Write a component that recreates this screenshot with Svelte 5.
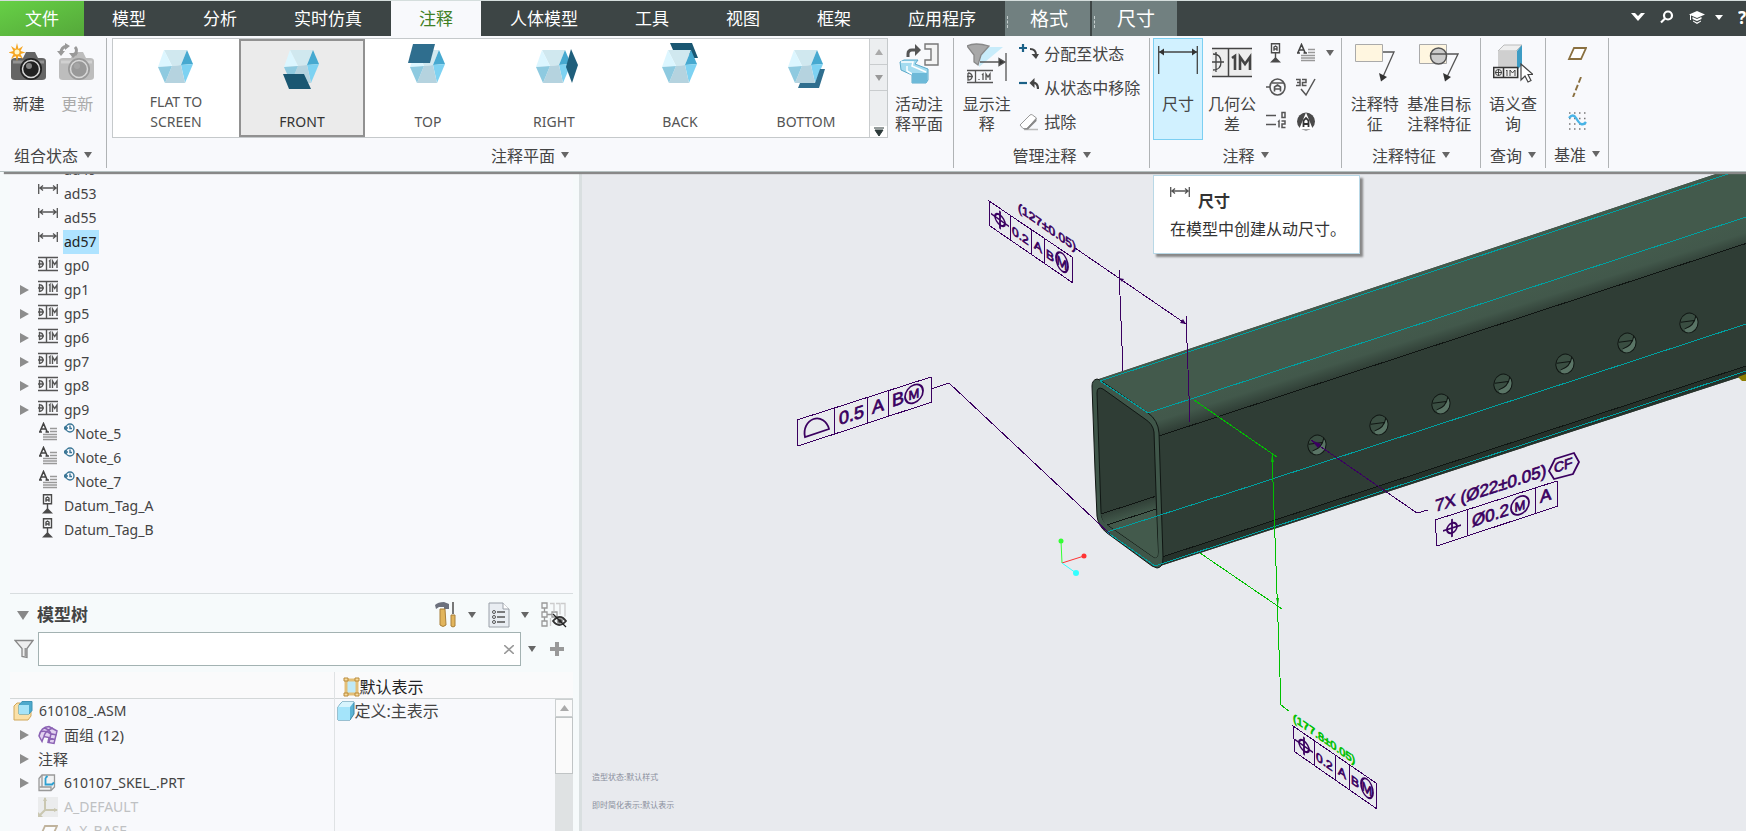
<script>
  let activeTab = $state("注释");
  let plane = $state("FRONT");
  let selected = $state("ad57");
  let search = $state("");

  const tabs = ["模型", "分析", "实时仿真", "注释", "人体模型", "工具", "视图", "框架", "应用程序"];
  const contextTabs = ["格式", "尺寸"];

  // extra face drawn over (or behind) the cube of each annotation plane
  const planes = [
    { name: "FLAT TO SCREEN" },
    { name: "FRONT", face: "6,35 27,35 34,50 12,50", color: "#1a5772" },
    { name: "TOP", face: "10,5 32,5 27,24 5,24", color: "#2f6e8e" },
    { name: "RIGHT", face: "42,10 49,26 43,44 37,28", color: "#1f5f7c" },
    { name: "BACK", face: "15,4 37,4 43,19 36,19 33,11 18,11", color: "#1a5772" },
    { name: "BOTTOM", face: "39,30 44,30 38,49 17,49 19,44 34,44", color: "#2f6e8e" },
  ];

  const annotations = [
    { name: "ad49", icon: "dim" },
    { name: "ad53", icon: "dim" },
    { name: "ad55", icon: "dim" },
    { name: "ad57", icon: "dim" },
    { name: "gp0", icon: "gtol" },
    { name: "gp1", icon: "gtol", open: true },
    { name: "gp5", icon: "gtol", open: true },
    { name: "gp6", icon: "gtol", open: true },
    { name: "gp7", icon: "gtol", open: true },
    { name: "gp8", icon: "gtol", open: true },
    { name: "gp9", icon: "gtol", open: true },
    { name: "Note_5", icon: "note", clock: true },
    { name: "Note_6", icon: "note", clock: true },
    { name: "Note_7", icon: "note", clock: true },
    { name: "Datum_Tag_A", icon: "tag" },
    { name: "Datum_Tag_B", icon: "tag" },
  ];

  const model = [
    { name: "610108_.ASM", icon: "asm", root: true, rep: "定义:主表示" },
    { name: "面组 (12)", icon: "quilt", open: true, cjk: true },
    { name: "注释", open: true, cjk: true },
    { name: "610107_SKEL_.PRT", icon: "part", open: true },
    { name: "A_DEFAULT", icon: "csys", dim: true },
    { name: "A_X_BASE", icon: "plane", dim: true },
  ];

  const holes = [
    [1317, 445], [1379, 425], [1441, 404], [1503, 384], [1565, 364], [1627, 343], [1689, 323],
  ];
</script>

{#snippet icon(name)}
  {#if name === "dim"}
    <svg width="20" height="20" viewBox="0 0 20 20" fill="none" stroke="#555" stroke-width="1.3">
      <path d="M.7 2v10M19.3 2v10M2 6h16M5 3.500 2 6l3 2.500M15 3.500 18 6l-3 2.500" />
    </svg>
  {:else if name === "gtol"}
    <svg width="20" height="20" viewBox="0 0 20 20" fill="none" stroke="#555" stroke-width="1.400">
      <path d="M0 3.500h20M0 16.500h20M8.500 3.500v13" />
      <path d="M1 6.500q4 .5 4 3.500t-4 3.500M1.500 6v8M0 10h6M11 7.500l1-1v7.500M14.500 14V7l2.200 3.500L19 7v7" />
    </svg>
  {:else if name === "note"}
    <svg width="20" height="20" viewBox="0 0 20 20" fill="none" stroke="#999" stroke-width="1.300">
      <path d="M12 6.500h7M12 9.500h7M5 12.500h14M5 15h14M5 17.500h14" />
      <path d="M2 9.500 5.500 1.500 9 9.500M3 7h5M1 10h3M7.500 10H11" stroke="#444" stroke-width="1.600" />
    </svg>
  {:else if name === "tag"}
    <svg width="20" height="20" viewBox="0 0 20 20" fill="none" stroke="#4a4a4a" stroke-width="1.400">
      <path d="M5.500.8h8v9h-8zM9.500 10v6M8 7.800V4l1.500-1 1.500 1v3.800M8 6h3" />
      <path d="M4 19.500 9.500 14l5.500 5.500z" fill="#4a4a4a" stroke="none" />
    </svg>
  {:else if name === "bubble"}
    <svg width="20" height="20" viewBox="0 0 20 20" fill="none" stroke="#555" stroke-width="1.600">
      <path d="M0 10h4M6 6h12M8.500 14.500V10l3-2 3 2v4.500M8.500 12h6" /><ellipse cx="11.500" cy="10" rx="7.500" ry="8" />
    </svg>
  {:else if name === "finish"}
    <svg width="20" height="20" viewBox="0 0 20 20" fill="none" stroke="#555" stroke-width="1.500">
      <path d="M0 2.500h4v6H0M1 5.500h3M6 2.500h4v3H6.500v3H10.500M5 12l5 6 9-16" />
    </svg>
  {:else if name === "ordinate"}
    <svg width="20" height="20" viewBox="0 0 20 20" fill="none" stroke="#555" stroke-width="1.500">
      <path d="M0 4.500h10M0 13.500h10M16 1.500h3v5h-3zM12 11l1-1v6.500M15.500 10h3.500v3h-3v3.500h3.500" />
    </svg>
  {:else if name === "target"}
    <svg width="20" height="20" viewBox="0 0 20 20">
      <circle cx="10" cy="10.500" r="9" fill="#4a4a4a" /><path d="M10 1.500 17 18.500H3z" fill="#fff" />
      <path d="M7.500 16V9.500L10 7l2.500 2.500V16M7.500 13h5" fill="none" stroke="#333" stroke-width="1.800" />
    </svg>
  {:else if name === "plane"}
    <svg width="20" height="20" viewBox="0 0 20 20"><path d="M7 5h12l-5 11H2z" fill="#fff" stroke="#8a7040" stroke-width="1.800" /></svg>
  {:else if name === "axis"}
    <svg width="20" height="20" viewBox="0 0 20 20"><path d="M14 0 6 20" stroke="#8a7040" stroke-width="1.900" stroke-dasharray="6 2.500" /></svg>
  {:else if name === "curve"}
    <svg width="20" height="20" viewBox="0 0 20 20" fill="none">
      <path d="M2 2h17M2 7.500h17M2 13h17M2 18h17" stroke="#777" stroke-width="1.500" stroke-dasharray="1.500 3.500" />
      <path d="M2 7q4-5 7 0t5 6q3 1 5-2" stroke="#49b4e6" stroke-width="2.400" />
    </svg>
  {:else if name === "add"}
    <svg width="20" height="20" viewBox="0 0 20 20">
      <path d="M0 5h8M4 1v8" stroke="#1b6187" stroke-width="2.200" />
      <path d="M11 6q6 0 6 6" fill="none" stroke="#444" stroke-width="2" /><path d="M12.500 11H20l-3 5z" fill="#444" />
    </svg>
  {:else if name === "remove"}
    <svg width="20" height="20" viewBox="0 0 20 20">
      <path d="M0 6h8" stroke="#1b6187" stroke-width="2.200" />
      <path d="M13 6q6-1 6 6" fill="none" stroke="#444" stroke-width="2.200" /><path d="M15.500 1v10L10.500 6z" fill="#444" />
    </svg>
  {:else if name === "eraser"}
    <svg width="20" height="20" viewBox="0 0 20 20">
      <path d="M5 18.500h14" stroke="#bbb" stroke-width="1.500" />
      <path d="M1 14 11 4q1-1 2.500 0l4 3L8 17.500H4z" fill="#fff" stroke="#999" /><path d="M17.500 7v3L9 18.500H4.500L8 17z" fill="#888" />
    </svg>
  {:else if name === "asm"}
    <svg width="20" height="20" viewBox="0 0 20 20">
      <path d="M1 5l3-3h3v10h8V8l3 1v6l-3 4H1z" fill="#fbe0a8" stroke="#d0a75a" />
      <path d="M6 4l3-3.500h10v9L16 13H6z" fill="#4da9cd" stroke="#3f94b5" /><path d="M6 4h10v9H6z" fill="#a6e3f8" />
    </svg>
  {:else if name === "solid"}
    <svg width="18" height="20" viewBox="0 0 18 20">
      <path d="M1 6l4-5h12v12l-4 6H1z" fill="#5ab4d6" stroke="#3a86a4" /><path d="M1 6h12v13H1z" fill="#a4e4fa" />
      <path d="M1 6l4-5h12l-4 5z" fill="#d7f4fd" />
    </svg>
  {:else if name === "quilt"}
    <svg width="20" height="20" viewBox="0 0 20 20" fill="none" stroke="#8b62b4" stroke-width="1.500">
      <path d="M1 11Q3 2 11 1.500L19 6l-3 12.500-6-1 1-5-5-1q-1 2-2 5z" fill="#e2d2f0" />
      <path d="M3 6.500q6-1 9 2l6.500 1.500M6 3q5 1 7 5.500l-2 9M15 3Q8 5 6 11M11 13l6 1.500" />
    </svg>
  {:else if name === "part"}
    <svg width="18" height="18" viewBox="0 0 18 18" fill="none" stroke="#999" stroke-width="1.300">
      <path d="M1 4.500 4 1h12.500v12L13 16.500H1z" fill="#f0f1f2" /><path d="M4 1v12H1.500M4 13h9v3" />
      <path d="M7.500 4v6.500h6.500l2-2M7.500 4l2-2" stroke="#2d9fd0" stroke-width="1.800" />
    </svg>
  {:else if name === "csys"}
    <svg width="20" height="20" viewBox="0 0 20 20">
      <path d="M0 0h20v20H0z" fill="#dfe0e0" /><path d="M7 1v12h12M7 13l-6 6" fill="none" stroke="#9d9768" stroke-width="2" />
      <path d="M7 0l2 4H5zM20 13l-4-2v4zM0 20v-5l5 5z" fill="#9d9768" />
    </svg>
  {:else if name === "rep"}
    <svg width="17" height="20" viewBox="0 0 17 20">
      <path d="M3 3h11v14H3z" fill="#bfe9f7" stroke="#e3bf78" stroke-width="3" />
      <path d="M1 1h4v3H1zM12 1h4v3h-4zM1 16h4v3H1zM12 16h4v3h-4z" fill="#f7d99b" stroke="#b98a38" />
    </svg>
  {:else if name === "clock"}
    <svg class="clock" width="11" height="20" viewBox="0 0 11 20" fill="none" stroke="#3a7696" stroke-width="1.400">
      <circle cx="6" cy="6" r="4" /><path d="M6 3.500V6.500h2M0 6h4M2 4l-2 2 2 2" />
    </svg>
  {/if}
{/snippet}

{#snippet camera(body, lens)}
  <path d="M2 18q0-3 4-3h8l3-6h9l3 6h4q4 0 4 3v16q0 3-4 3H6q-4 0-4-3z" fill={body} />
  <path d="M4 19h31" stroke="#fff" stroke-opacity=".3" stroke-width="3" />
  <circle cx="22" cy="26" r="11" fill={lens} /><circle cx="22" cy="26" r="8.500" fill="none" stroke="#d8d8d8" stroke-width="1.500" />
  <circle cx="20" cy="23" r="3" fill="#aaa" opacity=".7" />
{/snippet}

{#snippet caret()}
  <svg class="caret" width="8" height="6" viewBox="0 0 8 6"><path d="M0 0h8L4 6z" fill="#666" /></svg>
{/snippet}

{#snippet expander(open)}
  <span class="expander">
    {#if open}<svg width="9" height="12" viewBox="0 0 9 12"><path d="M0 1l9 5-9 5z" fill="#8d8d8d" /></svg>{/if}
  </span>
{/snippet}

{#snippet position()}
  <g fill="none" stroke="#3a0060" stroke-width="1.800"><circle r="5" /><path d="M-9 0H9M0-9V9" /></g>
{/snippet}

{#snippet mmc(x, r)}
  <g transform="translate({x} -6)"><ellipse rx={r} ry="9" fill="none" stroke="#3a0060" stroke-width="1.800" /><text x="0" y="5" text-anchor="middle" font-size="13">M</text></g>
{/snippet}

<div class="app">
  <nav class="tabs">
    <button class="tab file">文件</button>
    {#each tabs as tab}
      <button class="tab" class:active={tab === activeTab} onclick={() => (activeTab = tab)}>{tab}</button>
    {/each}
    <div class="context">
      {#each contextTabs as tab}
        <button class="tab">{tab}</button>
      {/each}
    </div>
    <div class="tools">
      <button aria-label="最小化功能区"><svg width="14" height="9" viewBox="0 0 14 9"><path d="M0 0h4l3 3 3-3h4L7 8z" fill="#fff" /></svg></button>
      <button aria-label="搜索"><svg width="14" height="14" viewBox="0 0 14 14" fill="none" stroke="#fff" stroke-width="2.200"><circle cx="8" cy="5.500" r="4" /><path d="M5 8.500l-4 4" /></svg></button>
      <button class="learn" aria-label="学习"><svg width="16" height="14" viewBox="0 0 16 14" fill="#fff"><path d="M8 1l8 3.500L8 8 0 4.500zM3.500 7 8 9l4.500-2v2L8 11 3.500 9zM4 10.500l4 2 4-2v1L8 14l-4-2.500zM1 5h1v5H1z" /></svg>
        <svg width="8" height="5" viewBox="0 0 8 5"><path d="M0 0h8L4 5z" fill="#fff" /></svg></button>
      <button class="help">?</button>
    </div>
  </nav>

  <header class="ribbon">
    <section class="group w-state">
      <div class="body">
        <button class="big">
          <svg width="40" height="42" viewBox="0 0 40 42">
            {@render camera("#656565", "#222")}
            <path d="M8 0l1.500 6L14 3l-2.500 5 5 1.500-5 1.500 2.500 5-4.500-3L8 18l-1.500-5L2 16l2.500-5-5-1.500L4.500 8 2 3l4.500 3z" fill="#f5a623" /><circle cx="8" cy="9" r="2.500" fill="#fff6c8" />
          </svg>
          <span>新建</span>
        </button>
        <button class="big" disabled>
          <svg width="40" height="42" viewBox="0 0 40 42">
            {@render camera("#bdbdbd", "#999")}
            <path d="M4 10q0-6 6-7M18 4q3 3 0 8" fill="none" stroke="#999" stroke-width="3" /><path d="M8 0l5 3-5 4zM0 8h8l-4 5zM12 10l4 5 5-5z" fill="#999" />
          </svg>
          <span>更新</span>
        </button>
      </div>
      <button class="label">组合状态{@render caret()}</button>
    </section>

    <section class="group w-plane">
      <div class="body">
        <div class="gallery">
          {#each planes as p}
            <button class="plane" class:on={p.name === plane} onclick={() => (plane = p.name)}>
              <svg width="50" height="52" viewBox="0 0 50 52">
                {#if p.name === "BACK"}<polygon points={p.face} fill={p.color} />{/if}
                <path d="M13 11H36L30 26 21 27z" fill="#d0e8ef" /><path d="M13 11 21 27 7 28z" fill="#dcf6ff" />
                <path d="M36 11 42 25 30 26z" fill="#46a9d0" /><path d="M42 25 34 44 30 26z" fill="#7dd2f2" />
                <path d="M34 44H14L21 27 30 26z" fill="#b5d3df" /><path d="M14 44 7 28 21 27z" fill="#8ecae0" />
                {#if p.face && p.name !== "BACK"}<polygon points={p.face} fill={p.color} />{/if}
              </svg>
              <span>{p.name}</span>
            </button>
          {/each}
          <div class="spinner">
            <button aria-label="上"><svg width="8" height="6" viewBox="0 0 8 6"><path d="M0 6h8L4 0z" fill="#aaa" /></svg></button>
            <button aria-label="下"><svg width="8" height="6" viewBox="0 0 8 6"><path d="M0 0h8L4 6z" fill="#999" /></svg></button>
            <button class="more" aria-label="更多"><svg width="10" height="9" viewBox="0 0 10 9"><path d="M0 1h10M1 3h8L5 9z" fill="#2d3a3a" stroke="#2d3a3a" /></svg></button>
          </div>
        </div>
        <button class="big">
          <svg width="42" height="42" viewBox="0 0 42 42">
            <path d="M10 14v-3q0-4 4-4h5" fill="none" stroke="#555" stroke-width="3" /><path d="M17 1l6 6-6 6z" fill="#555" />
            <path d="M27 1h13v21H27v-5h6V6h-6z" fill="#f4f4f4" stroke="#777" stroke-width="1.400" />
            <path d="M2 19l4-2h14l-3 4 13 5v11l-2 3H14V32L3 27z" fill="#a5dcf0" stroke="#5ba9c9" />
            <path d="M3 19h12l-1 4 14 6M14 31l-5-3v-5" fill="none" stroke="#fff" stroke-width="1.500" /><path d="M14 30h15v10H14z" fill="#6db9d8" />
          </svg>
          <span>活动注<br />释平面</span>
        </button>
      </div>
      <button class="label">注释平面{@render caret()}</button>
    </section>

    <section class="group w-manage">
      <div class="body">
        <button class="big">
          <svg width="40" height="42" viewBox="0 0 40 42" fill="none" stroke="#555" stroke-width="1.300">
            <path d="M14 4h22L12 24z" fill="#c8ecfa" stroke="none" /><path d="M0 3q8-4 22 0l-8 9-3 10-4-3V12z" fill="#a8a8a8" stroke="#888" />
            <path d="M13 19h24M39 10v28" /><path d="M32 15.500l6 3.500-6 3.500z" fill="#333" /><path d="M0 27.500h26M0 39.500h26M8.500 27v12M1 30q4 0 4 3.500T1 37V30M0 33.500h6M12 37v-1M15 32l1-1v6M19 37v-6l2 3 2-3v6" />
          </svg>
          <span>显示注<br />释</span>
        </button>
        <div class="list">
          <button>{@render icon("add")}分配至状态</button>
          <button>{@render icon("remove")}从状态中移除</button>
          <button>{@render icon("eraser")}拭除</button>
        </div>
      </div>
      <button class="label">管理注释{@render caret()}</button>
    </section>

    <section class="group w-annotate">
      <div class="body">
        <button class="big hot">
          <svg width="40" height="42" viewBox="0 0 40 42" fill="none" stroke="#444" stroke-width="1.300">
            <path d="M.7 3v28M39.300 3v28M1 9h38" /><path d="M1 9l5-3.500v7zM39 9l-5-3.500v7z" fill="#333" stroke="none" />
          </svg>
          <span>尺寸</span>
        </button>
        <button class="big">
          <svg width="40" height="42" viewBox="0 0 40 42" fill="none" stroke="#444" stroke-width="1.500">
            <path d="M0 6h40v28H0z" fill="#ededed" stroke="none" /><path d="M0 5.500h40M0 33.500h40M16.500 5v28" /><path d="M1 11q8 0 8 8t-8 8M0 19h12M4 9v20" stroke-width="1.300" />
            <path d="M20 15l3-2v14M28 27V14l5 7 5-7v13" stroke-width="2.600" />
          </svg>
          <span>几何公<br />差</span>
        </button>
        <div class="grid">
          <button aria-label="基准特征符号">{@render icon("tag")}</button>
          <button aria-label="注解">{@render icon("note")}</button>
          <button aria-label="注解选项">{@render caret()}</button>
          <button aria-label="基准目标">{@render icon("bubble")}</button>
          <button aria-label="表面粗糙度">{@render icon("finish")}</button>
          <span></span>
          <button aria-label="纵坐标尺寸">{@render icon("ordinate")}</button>
          <button aria-label="符号">{@render icon("target")}</button>
        </div>
      </div>
      <button class="label">注释{@render caret()}</button>
    </section>

    <section class="group w-feature">
      <div class="body">
        <button class="big">
          <svg width="40" height="42" viewBox="0 0 40 42">
            <path d="M.5 1.500h27v17H.5z" fill="#fff6e0" stroke="#aaa" /><path d="M28 9h11L27 36" fill="none" stroke="#555" stroke-width="1.300" /><path d="M24 30l8 4-6 4.500z" fill="#333" />
          </svg>
          <span>注释特<br />征</span>
        </button>
        <button class="big">
          <svg width="40" height="42" viewBox="0 0 40 42">
            <path d="M.5 1.500h27v19H.5z" fill="#fff6e0" stroke="#aaa" /><circle cx="19.500" cy="13" r="8" fill="#ccc" stroke="#555" stroke-width="1.500" />
            <path d="M11 11h28L27 36" fill="none" stroke="#555" stroke-width="1.300" /><path d="M24 30l8 4-6 4.500z" fill="#333" />
          </svg>
          <span>基准目标<br />注释特征</span>
        </button>
      </div>
      <button class="label">注释特征{@render caret()}</button>
    </section>

    <section class="group w-query">
      <div class="body">
        <button class="big">
          <svg width="40" height="42" viewBox="0 0 40 42">
            <path d="M5 8l6-6h18l-6 6z" fill="#eee" stroke="#bbb" /><path d="M5 8h19v18H5z" fill="#cfcfcf" /><path d="M24 8l5-6v20l-5 5z" fill="#3d9cc4" />
            <path d="M.7 24.500h24v10H.7zM10.500 24v11" fill="#f1f1f1" stroke="#333" stroke-width="1.500" /><circle cx="5.500" cy="29.500" r="3" fill="none" stroke="#444" /><path d="M2 29.500h7M5.500 26v7M13 28l1-1v6M17 33v-6l2.500 3 2.500-3v6" fill="none" stroke="#444" />
            <path d="M28 21v16l4-4 3 6 3-1.500-3-6h5z" fill="#fff" stroke="#444" stroke-width="1.200" />
          </svg>
          <span>语义查<br />询</span>
        </button>
      </div>
      <button class="label">查询{@render caret()}</button>
    </section>

    <section class="group w-datum">
      <div class="body">
        <div class="list">
          <button aria-label="平面">{@render icon("plane")}</button>
          <button aria-label="轴">{@render icon("axis")}</button>
          <button aria-label="草绘">{@render icon("curve")}</button>
        </div>
      </div>
      <button class="label">基准{@render caret()}</button>
    </section>

    <div class="tooltip" role="tooltip">
      <h3>{@render icon("dim")}尺寸</h3>
      <p>在模型中创建从动尺寸。</p>
    </div>
  </header>

  <main>
    <aside>
      <ul class="annotations">
        {#each annotations as a}
          <li>
            {@render expander(a.open)}
            <span class="ico">{@render icon(a.icon)}</span>
            {#if a.clock}{@render icon("clock")}{/if}
            <button class:selected={a.name === selected} onclick={() => (selected = a.name)}>{a.name}</button>
          </li>
        {/each}
      </ul>

      <div class="title">
        <svg width="12" height="9" viewBox="0 0 12 9"><path d="M0 0h12L6 9z" fill="#888" /></svg>
        <h2>模型树</h2>
        <button aria-label="设置">
          <svg width="22" height="26" viewBox="0 0 22 26">
            <path d="M0 3q3-3 9-3l5 2v5H9V5H4L1 7z" fill="#6c707c" /><path d="M5 7h5l1 16q-3 3-6 0z" fill="#e2b55c" stroke="#a9803a" />
            <path d="M18 0v12" stroke="#777" stroke-width="2" /><path d="M16 13h4v11q-2 2-4 0z" fill="#e2b55c" stroke="#a9803a" />
          </svg>
          {@render caret()}
        </button>
        <button aria-label="显示">
          <svg width="22" height="26" viewBox="0 0 22 26">
            <path d="M1 1h14l6 6v18H1z" fill="#e9edf2" stroke="#9aa0a8" /><path d="M15 1v6h6" fill="#fff" stroke="#9aa0a8" />
            <path d="M9 10h8M9 15h8M9 20h8" stroke="#555" stroke-width="1.500" /><g fill="none" stroke="#555"><circle cx="6" cy="10" r="1.500" /><circle cx="6" cy="15" r="1.500" /><circle cx="6" cy="20" r="1.500" /></g>
          </svg>
          {@render caret()}
        </button>
        <button aria-label="隐藏">
          <svg width="26" height="26" viewBox="0 0 26 26" fill="none" stroke="#999" stroke-width="1.300">
            <path d="M1 1h5v5H1zM1 10h5v5H1zM1 19h5v5H1zM3.500 6v4M3.500 15v4M6 12.500h5M11 10h5v5h-5z" /><path d="M9 1.500h4v8M15 1.500h4v11M20 1.500h4v13M9.500 16v8" stroke="#ccc" />
            <path d="M12 19q7-8 13 0-7 8-13 0z" stroke="#333" stroke-width="1.800" /><circle cx="19" cy="19" r="2.500" fill="#333" /><path d="M12 12l13 13" stroke="#222" />
          </svg>
        </button>
      </div>

      <div class="filter">
        <svg width="20" height="20" viewBox="0 0 20 20"><path d="M1 1.500h18l-6 8v9l-5-1V9.500z" fill="#eee" stroke="#888" stroke-width="1.300" /><path d="M10.500 9h2.500v9l-2.500-1z" fill="#999" /></svg>
        <div class="box">
          <input type="text" aria-label="搜索模型树" bind:value={search} />
          <button aria-label="清除" onclick={() => (search = "")}><svg width="10" height="9" viewBox="0 0 10 9"><path d="M0 0l10 9M10 0 0 9" stroke="#999" stroke-width="1.600" /></svg></button>
        </div>
        {@render caret()}
        <button class="plus" aria-label="添加"><svg width="14" height="14" viewBox="0 0 14 14"><path d="M0 7h14M7 0v14" stroke="#999" stroke-width="4" /></svg></button>
      </div>

      <div class="model">
        <table>
          <thead>
            <tr><th></th><th><span class="cell">{@render icon("rep")}默认表示</span></th></tr>
          </thead>
          <tbody>
            {#each model as m}
              <tr class:dim={m.dim} class:cjk={m.cjk}>
                <td>
                  <span class="cell">
                    {#if !m.root}{@render expander(m.open)}{/if}
                    {#if m.icon}<span class="ico">{@render icon(m.icon)}</span>{/if}
                    {m.name}
                  </span>
                </td>
                <td>{#if m.rep}<span class="cell">{@render icon("solid")}{m.rep}</span>{/if}</td>
              </tr>
            {/each}
          </tbody>
        </table>
        <div class="scroll">
          <button aria-label="向上"><svg width="9" height="6" viewBox="0 0 9 6"><path d="M0 6h9L4.500 0z" fill="#aaa" /></svg></button>
          <div class="thumb"></div>
        </div>
      </div>
    </aside>

    <div class="canvas">
      <svg class="scene" viewBox="582 172 1164 659" preserveAspectRatio="xMinYMin slice">
        <defs>
          <linearGradient id="fillet" gradientUnits="userSpaceOnUse" x1="1240" y1="382" x2="1248" y2="407">
            <stop offset="0" stop-color="#435a4c" /><stop offset=".45" stop-color="#42584b" /><stop offset="1" stop-color="#2f3d35" />
          </linearGradient>
          <linearGradient id="inner" gradientUnits="userSpaceOnUse" x1="1126" y1="504" x2="1130" y2="518">
            <stop offset="0" stop-color="#2f3d35" /><stop offset="1" stop-color="#435a4c" />
          </linearGradient>
        </defs>

        <!-- square tube -->
        <path d="M1099 379 1240 332 1746 164V375L1157 567 1148 413z" fill="#2f3d35" />
        <path d="M1099 379 1240 332 1746 164v53L1148 413z" fill="#435a4c" />
        <path d="M1148 413 1746 217v26.500L1159 436z" fill="url(#fillet)" />
        <path d="M1162 557 1746 366v9L1157 567z" fill="#26322b" />
        <path class="edge" d="M1159 436 1746 243.500M1162 557 1746 366" />
        <path d="M1092 386q0-6 5-7l3 1 48 33q10 7 11 20l4 124q0 11-6 11l-5-2-45-33q-9-7-10-17l-2-46z" fill="#3f5649" stroke="#101613" />
        <path d="M1097 393q0-7 6-4l42 30q8 5 9 13l4 120q0 9-6 4l-43-30q-8-5-8-14z" fill="#2f3d35" stroke="#101613" />
        <path d="M1101 514 1155 496.500l1 13-50 16q-4-5-5-11z" fill="url(#inner)" />
        <path d="M1108 525 1156 509l2 43q0 9-6 4l-44-31z" fill="#435a4c" />
        <path class="edge" d="M1101 514 1155 496.500M1107 525 1156 509" />
        <path d="M1738 377l8-3v7h-4z" fill="#8c7d00" />
        <g class="cyan">
          <path d="M1100 381 1240 335 1740 170M1100 381l48 32M1148 413 1746 217M1107 532 1240 489.500 1746 324M1155 566 1240 538 1746 371M1107 532l48 34" />
        </g>
        {#each holes as [x, y]}
          <g transform="translate({x} {y}) rotate(20)">
            <ellipse rx="9" ry="10" fill="#3a4e42" /><path d="M4-9q5 3 5 9t-6 10q-4 0-5-3 8-6 6-16z" fill="#5a7566" />
            <ellipse rx="9" ry="10" fill="none" stroke="#101613" /><path d="M4-9q2 10-6 16M-8 2 4-4" fill="none" stroke="#101613" />
          </g>
        {/each}

        <!-- leaders and dimension lines -->
        <g class="leader">
          <path d="M1075 248l111 76M1119 270l4 101M1186 316l4 106M931 389l18-6 161 151M1311 440l106 73 11-3" />
          <path d="M797 420l134-43 1 25-134 44zM834 408l1 26M867 398l1 25M888 391l1 25" />
          <path d="M989 201l83 56 1 26-83-57zM1010 215v25M1031 229v25M1044 238v25" />
          <path d="M1293 726l83 57 1 26-82-57zM1314 740v26M1335 755v26M1349 764v26" />
          <path d="M1435 520l122-39 1 25-121 40zM1467 510v26M1535 488l1 25" />
        </g>
        <path d="M1186 324l-6-1 3-4zM1119 278l5 1-2 3zM1311 440l10 4-3 4z" fill="#3a0060" />
        <path class="green-line" d="M1194 400l83 57M1272 454l9 251 8 6M1200 553l82 56" />
        <path d="M1272 455l2 7h-3zM1278 605l-2-7h3z" fill="#00c000" />

        <g class="mark">
          <path d="M805 437a12 14 0 0 1 24-8z" fill="none" stroke="#3a0060" stroke-width="1.800" />
          <g transform="translate(839 425) skewY(-18)"><text font-size="18">0.5</text></g>
          <g transform="translate(872 414) skewY(-18)"><text font-size="18">A</text></g>
          <g transform="translate(892 407) skewY(-18)"><text font-size="18">B</text>{@render mmc(22, 9)}</g>

          <g transform="translate(1018 211) skewY(35)"><text class="narrow">(127±0.05)</text></g>
          <g transform="translate(1000 220) skewY(35)">{@render position()}</g>
          <g transform="translate(1012 234) skewY(35)"><text class="narrow">0.2</text></g>
          <g transform="translate(1034 248) skewY(35)"><text class="narrow">A</text></g>
          <g transform="translate(1046 257) skewY(35)"><text class="narrow">B</text>{@render mmc(16, 6)}</g>

          <g transform="translate(1293 721) skewY(35)"><text class="narrow green">(177.8±0.05)</text></g>
          <g transform="translate(1304 746) skewY(35)">{@render position()}</g>
          <g transform="translate(1316 760) skewY(35)"><text class="narrow">0.2</text></g>
          <g transform="translate(1338 774) skewY(35)"><text class="narrow">A</text></g>
          <g transform="translate(1351 783) skewY(35)"><text class="narrow">B</text>{@render mmc(16, 6)}</g>

          <g transform="translate(1435 512) skewY(-18)"><text font-size="17">7X (Ø22±0.05)</text></g>
          <path d="M1549 471l6-12 19-6 5 9-6 12-19 5z" fill="none" stroke="#3a0060" stroke-width="1.800" />
          <g transform="translate(1554 473) skewY(-18)"><text font-size="14">CF</text></g>
          <g transform="translate(1452 528) skewY(-18)">{@render position()}</g>
          <g transform="translate(1472 527) skewY(-18)"><text font-size="17">Ø0.2</text>{@render mmc(48, 9)}</g>
          <g transform="translate(1540 503) skewY(-18)"><text font-size="17">A</text></g>
        </g>

        <!-- view triad -->
        <path d="M1062 563l-1-22" stroke="#3f3" /><path d="M1062 563l22-7" stroke="#f33" /><path d="M1062 563l14 10" stroke="#3ff" />
        <circle cx="1061" cy="541" r="2.500" fill="#3f3" /><circle cx="1084" cy="556" r="2.500" fill="#f33" /><circle cx="1076" cy="573" r="3" fill="#3ff" />

        <g class="status"><text x="592" y="780">造型状态:默认样式</text><text x="592" y="808">即时简化表示:默认表示</text></g>
      </svg>
    </div>
  </main>
</div>

<style>
  :global(body) {
    overflow: hidden;
  }

  .app {
    display: flex;
    flex-direction: column;
    height: 100vh;
    font-family: "Noto Sans", "Noto Sans CJK SC", sans-serif;
    font-size: 14px;
    color: #444;
    background: #f8f9fc;
  }

  button {
    margin: 0;
    padding: 0;
    border: 0;
    background: none;
    font: inherit;
    color: inherit;
    cursor: pointer;
  }

  svg {
    display: block;
    flex: none;
  }

  .tabs {
    display: flex;
    flex: none;
    height: 35px;
    border-top: 1px solid #d5dedd;
    background: #3d4545;
    overflow: hidden;
  }

  .tab {
    flex: none;
    padding: 0 28px 2px;
    margin-right: 1px;
    font-family: "Noto Sans CJK SC", sans-serif;
    font-size: 17px;
    line-height: 32px;
    color: #fff;
  }

  .tab.file {
    width: 84px;
    margin: 0;
    padding: 0 0 2px;
    background: linear-gradient(160deg, #66d046, #55a83a);
  }

  .tab.active {
    background: #f8f9fc;
    color: #418024;
  }

  .context {
    display: flex;
    gap: 2px;
  }

  .context .tab {
    width: 85px;
    margin: 0;
    padding: 0 0 2px;
    font-size: 19px;
    background: #718080;
  }

  /* dotted grips at both lower corners */
  .context .tab::before,
  .context .tab::after {
    content: "";
    float: left;
    height: 12px;
    margin: 14px 0 0 2px;
    border-left: 1px dashed #c5cece;
  }

  .context .tab::after {
    float: right;
    margin: 14px 2px 0 0;
  }

  .context .tab::after {
    margin-top: -18px;
  }

  .tools {
    display: flex;
    align-items: center;
    gap: 15px;
    height: 32px;
    margin-left: auto;
  }

  .learn {
    display: flex;
    align-items: center;
    gap: 10px;
  }

  .help {
    width: 8px;
    overflow: hidden;
    font-size: 17px;
    font-weight: 700;
    color: #fff;
  }

  .ribbon {
    position: relative;
    z-index: 2;
    display: flex;
    flex: none;
    height: 135px;
    border-bottom: 1px solid #b5c0c0;
    background: #f8f9fc;
    box-shadow: 4px 2px 1px #888;
  }

  .group {
    display: flex;
    flex-direction: column;
    flex: none;
    box-sizing: border-box;
    margin: 2px 0 3px;
    border-right: 1px solid #b0b3b5;
    font-family: "Noto Sans CJK SC", sans-serif;
    font-size: 16px;
  }

  .w-state { width: 107px; }
  .w-plane { width: 847px; }
  .w-manage { width: 196px; }
  .w-annotate { width: 192px; }
  .w-feature { width: 139px; }
  .w-query { width: 65px; }
  .w-datum { width: 63px; }

  .body {
    display: flex;
    justify-content: space-evenly;
    height: 102px;
  }

  .w-plane .body {
    justify-content: flex-start;
    gap: 7px;
    padding-left: 5px;
  }

  .w-annotate .body {
    justify-content: flex-start;
    gap: 5px;
    padding-left: 3px;
  }

  .label {
    display: flex;
    align-items: center;
    justify-content: center;
    gap: 6px;
    height: 32px;
    padding-top: 1px;
  }

  .big {
    display: flex;
    flex-direction: column;
    align-items: center;
    gap: 8px;
    box-sizing: border-box;
    height: 102px;
    padding-top: 5px;
    line-height: 20px;
    white-space: nowrap;
  }

  .big:disabled {
    color: #aaa;
  }

  .big.hot {
    width: 50px;
    padding-top: 4px;
    border: 1px solid #7ccff2;
    background: #d1f1ff;
  }

  .gallery {
    display: flex;
    box-sizing: border-box;
    height: 100px;
    border: 1px solid #c5c9cb;
    background: #fff;
  }

  .plane {
    display: flex;
    flex-direction: column;
    justify-content: space-between;
    align-items: center;
    box-sizing: border-box;
    width: 126px;
    padding: 0 30px 5px;
    font-family: "Noto Sans", sans-serif;
    font-size: 14px;
    line-height: 20px;
    color: #555;
  }

  .plane svg {
    margin-bottom: -10px;
  }

  .plane.on {
    background: #ebebeb;
    box-shadow: inset 0 0 0 2px #919191;
    color: #333;
  }

  .spinner {
    display: flex;
    flex-direction: column;
    width: 17px;
    border-left: 1px solid #c9ccce;
    background: #eceef0;
  }

  .spinner button {
    display: grid;
    place-items: center;
    height: 26px;
    border-bottom: 1px solid #c9ccce;
  }

  .spinner .more {
    height: 11px;
    margin-top: auto;
    border: 0;
    background: #fff;
  }

  .list {
    display: flex;
    flex-direction: column;
    margin-top: -2px;
  }

  .list button {
    display: flex;
    align-items: center;
    gap: 5px;
    height: 34px;
    white-space: nowrap;
  }

  .grid {
    display: grid;
    grid-template: repeat(3, 34px) / 20px 20px 8px;
    column-gap: 10px;
    align-items: center;
    margin: -2px 0 0 5px;
  }

  .tooltip {
    position: absolute;
    left: 1153px;
    top: 139px;
    box-sizing: border-box;
    width: 207px;
    height: 79px;
    padding: 9px 16px;
    border: 1px solid #b9d8e6;
    background: #fff;
    box-shadow: 3px 3px 2px #888;
    font-family: "Noto Sans CJK SC", sans-serif;
    font-size: 16px;
    color: #333;
  }

  .tooltip h3 {
    display: flex;
    gap: 8px;
    margin: 0;
    font-size: 16px;
    line-height: 30px;
  }

  .tooltip p {
    margin: 0;
    line-height: 26px;
    white-space: nowrap;
  }

  main {
    display: flex;
    flex: 1;
    min-height: 0;
  }

  aside {
    display: flex;
    flex-direction: column;
    flex: none;
    box-sizing: border-box;
    width: 582px;
    padding: 0 6px 0 10px;
    border-right: 3px solid #d9dfe0;
    background: #f6fafb;
  }

  .annotations {
    display: flex;
    flex-direction: column;
    justify-content: flex-end;
    flex: none;
    box-sizing: border-box;
    height: 422px;
    margin: 0;
    padding: 0 0 51px 10px;
    border-bottom: 1px solid #d8dddf;
    background: #f8f9fc;
    list-style: none;
    overflow: hidden;
  }

  .annotations li {
    display: flex;
    align-items: center;
    flex: none;
    height: 24px;
  }

  .annotations button {
    padding-right: 3px;
    line-height: 24px;
  }

  .annotations .selected {
    margin-left: -1px;
    padding-left: 1px;
    background: #aee3ff;
    color: #222;
  }

  .expander {
    width: 18px;
  }

  .ico {
    display: flex;
    width: 26px;
  }

  .annotations .ico {
    align-self: flex-start;
  }

  .clock {
    align-self: flex-start;
  }

  .title {
    display: flex;
    align-items: center;
    gap: 12px;
    height: 38px;
    padding: 4px 6px 0 7px;
    box-sizing: border-box;
  }

  .title h2 {
    flex: 1;
    margin: 0 0 0 -4px;
    font-size: 17px;
    line-height: 24px;
  }

  .title button {
    display: flex;
    align-items: center;
    gap: 11px;
  }

  .filter {
    display: flex;
    align-items: center;
    gap: 4px;
    height: 34px;
    padding: 0 9px 0 4px;
  }

  .box {
    display: flex;
    flex: 1;
    align-items: center;
    box-sizing: border-box;
    height: 34px;
    padding-right: 6px;
    border: 1px solid #a3b2b2;
    background: #fff;
  }

  .box input {
    flex: 1;
    border: 0;
    outline: 0;
    font: inherit;
  }

  .filter .caret {
    margin: 0 10px 0 3px;
  }

  .model {
    display: grid;
    grid-template-columns: 1fr 18px;
    flex: 1;
    min-height: 0;
    margin-top: 6px;
    overflow: hidden;
    background: linear-gradient(#fafafb 26px, #d3d7d8 26px, #d3d7d8 27px, #f8f9fc 27px);
  }

  table {
    align-self: start;
    width: 100%;
    border-collapse: collapse;
    table-layout: fixed;
  }

  th,
  td {
    height: 24px;
    padding: 0 0 0 2px;
    line-height: 24px;
    text-align: left;
    font-weight: 400;
  }

  th {
    height: 27px;
    padding-top: 3px;
    box-sizing: border-box;
    color: #222;
  }

  th:first-child {
    width: 324px;
  }

  th + th,
  td + td {
    border-left: 1px solid #dfe2e4;
  }

  th + th {
    padding-left: 8px;
  }

  td + td,
  th + th {
    font-size: 16px;
  }

  td:first-child {
    padding-left: 3px;
  }

  td:first-child .cell {
    padding-left: 7px;
  }

  tr:first-child td:first-child .cell {
    padding-left: 0;
  }

  .cell {
    display: flex;
    align-items: center;
    height: 24px;
    white-space: nowrap;
  }

  .cjk {
    font-size: 15px;
  }

  .dim {
    color: #bfc1c3;
  }

  .dim .ico {
    opacity: 0.5;
  }

  .scroll {
    display: flex;
    flex-direction: column;
    margin-top: 27px;
    background: #dfe2e3;
  }

  .scroll button {
    display: grid;
    place-items: center;
    height: 18px;
    border: 1px solid #ccd0d1;
    background: #fafafa;
  }

  .thumb {
    height: 55px;
    border: 1px solid #c0c4c5;
    background: #fafafa;
  }

  .canvas {
    flex: 1;
    min-width: 0;
    background: #e8eaee;
    overflow: hidden;
  }

  .scene {
    width: 100%;
    height: 100%;
  }

  .edge,
  .cyan,
  .leader,
  .green-line {
    fill: none;
    stroke: #101613;
    shape-rendering: crispEdges;
  }

  .cyan {
    stroke: #00a0a0;
  }

  .leader {
    stroke: #3a0060;
  }

  .green-line {
    stroke: #00c000;
  }

  .mark {
    font-family: "Liberation Sans", sans-serif;
    fill: #3a0060;
  }

  .mark text {
    stroke: #3a0060;
    stroke-width: 0.7px;
  }

  .mark .narrow {
    font-family: "Liberation Sans Narrow", "Liberation Sans", sans-serif;
    font-size: 12px;
  }

  .mark .green {
    font-size: 11px;
    fill: #00c000;
    stroke: #00c000;
  }

  .status {
    font-family: "Noto Sans CJK SC", sans-serif;
    font-size: 8px;
    fill: #8a8f9d;
  }
</style>
